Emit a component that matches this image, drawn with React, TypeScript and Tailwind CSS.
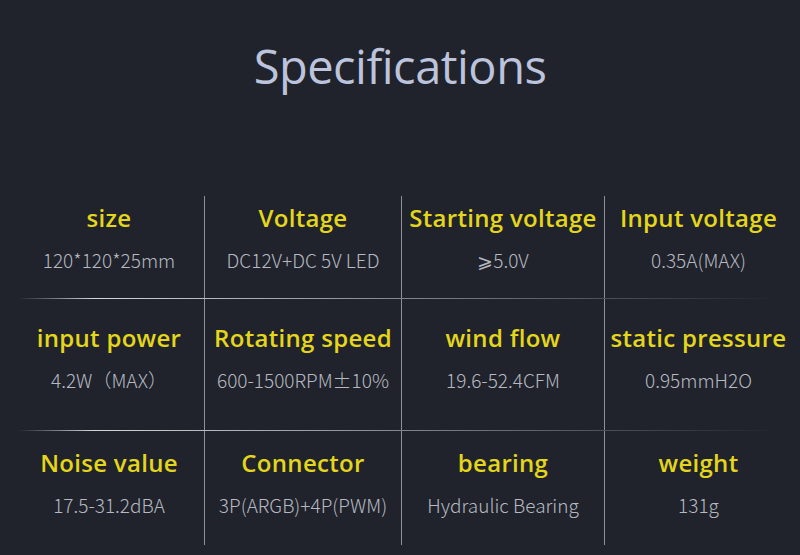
const specs = [
  [
    { label: 'size', value: '120*120*25mm' },
    { label: 'Voltage', value: 'DC12V+DC 5V LED' },
    { label: 'Starting voltage', value: '⩾5.0V' },
    { label: 'Input voltage', value: '0.35A(MAX)' }
  ],
  [
    { label: 'input power', value: '4.2W（MAX）' },
    { label: 'Rotating speed', value: '600-1500RPM±10%' },
    { label: 'wind flow', value: '19.6-52.4CFM' },
    { label: 'static pressure', value: '0.95mmH2O' }
  ],
  [
    { label: 'Noise value', value: '17.5-31.2dBA' },
    { label: 'Connector', value: '3P(ARGB)+4P(PWM)' },
    { label: 'bearing', value: 'Hydraulic Bearing' },
    { label: 'weight', value: '131g' }
  ]
]

const rowStyles = ['h-[102px] pt-[7px]', 'h-[131px] pt-[24px]', 'h-[114px] pt-[17px]']

function Divider() {
  return (
    <div className="ml-[18px] mr-[23px] h-px bg-gradient-to-r from-transparent via-[#d4d6da] via-10% to-transparent" />
  )
}

export default function App() {
  return (
    <div className="h-[555px] w-[800px] overflow-hidden bg-[#20232b] font-['Open_Sans',sans-serif]">
      <div className="flex h-[196px] justify-center pt-[36px]">
        <h1 className="text-[47px] leading-[60px] tracking-[-0.5px] text-[#bcc3dc]">Specifications</h1>
      </div>
      {specs.map((row, r) => (
        <div key={r}>
          {r > 0 && <Divider />}
          <div className="grid grid-cols-[190px_197px_203px_188px] pl-[14px]">
            {row.map((s, i) => (
              <div
                key={s.label}
                className={`flex flex-col items-center ${rowStyles[r]} ${
                  i > 0 ? 'border-l border-[#8e9096]' : ''
                }`}
              >
                <div className="whitespace-nowrap text-[24px] font-semibold leading-[30px] tracking-[0.3px] text-[#e4d61b]">
                  {s.label}
                </div>
                <div className="mt-[14px] whitespace-nowrap font-['Noto_Sans_CJK_SC',sans-serif] text-[19px] font-light leading-[26px] text-[#b6b9c1]">
                  {s.value}
                </div>
              </div>
            ))}
          </div>
        </div>
      ))}
    </div>
  )
}
